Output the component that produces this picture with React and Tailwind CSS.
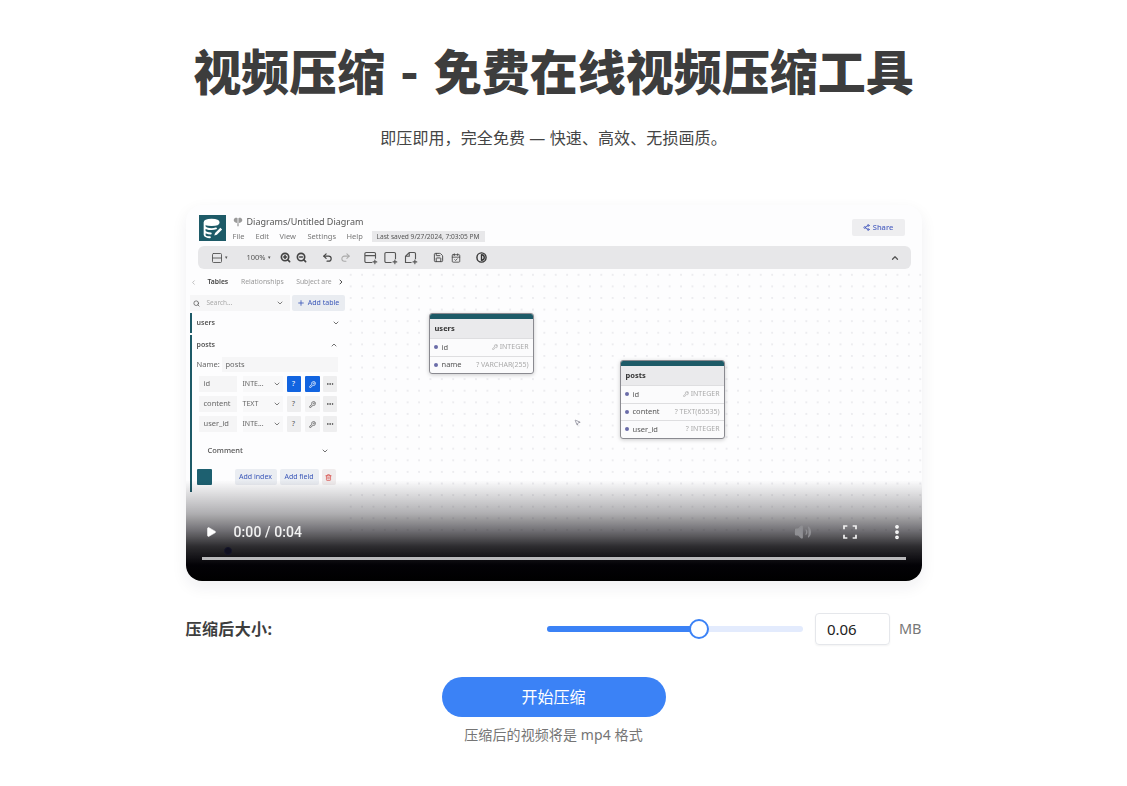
import React from "react";
import {
  Search, ChevronDown, ChevronUp, ChevronLeft, ChevronRight, Plus, KeyRound, MoreHorizontal, Trash2,
  Share2, ZoomIn, ZoomOut, Undo2, Redo2, Save, CalendarCheck, Contrast, Rows2, MousePointer2, Play, Volume2, EllipsisVertical,
} from "lucide-react";

function Logo() {
  return (
    <div className="w-[27px] h-[26px] bg-[#1d5a67] flex items-center justify-center shrink-0">
      <svg viewBox="0 0 24 24" className="w-[21px] h-[21px]" fill="none" stroke="#fff" strokeWidth="2.2" strokeLinecap="round">
        <ellipse cx="11" cy="5" rx="8" ry="3" fill="#fff" />
        <path d="M3 9.5c0 1.8 3.6 3.2 8 3.2 2 0 3.6-.3 5-.8M3 14.5c0 1.8 3.6 3.2 7 3.2M3 6v13c0 1.7 3 3 6 3" />
        <path d="M14 20l1-3 6-6 2 2-6 6z" fill="#fff" stroke="none" />
      </svg>
    </div>
  );
}

function TitleIcon() {
  return (
    <svg viewBox="0 0 24 24" className="w-[10px] h-[10px] mr-[4px]" fill="#9a9a9a">
      <path d="M11 3C8 1 3 2 2 6c-1 3 1 6 4 7l5 2zM13 3c3-2 8-1 9 3 1 3-1 6-4 7l-5 2z" />
      <path d="M10.5 15h3v7h-3z" />
    </svg>
  );
}

function AddShape({ kind }) {
  return (
    <svg viewBox="0 0 24 24" className="w-[15px] h-[15px]" fill="none" stroke="#555" strokeWidth="1.8" strokeLinecap="round">
      {kind === 0 && <path d="M14 20H5a2 2 0 0 1-2-2V6a2 2 0 0 1 2-2h13a2 2 0 0 1 2 2v7M3 9h17M19 16v6M16 19h6" />}
      {kind === 1 && <path d="M13 20H5a2 2 0 0 1-2-2V6a2 2 0 0 1 2-2h13a2 2 0 0 1 2 2v8M19 16v6M16 19h6" />}
      {kind === 2 && <path d="M13 20H4V10l6-6h8a2 2 0 0 1 2 2v8M4 10h6V4M19 16v6M16 19h6" />}
    </svg>
  );
}

function Toolbar() {
  const ic = "w-[11px] h-[11px] text-[#444]";
  return (
    <div className="mx-[12px] mt-[5px] h-[23px] w-[713px] bg-[#e7e7e9] rounded-[6px] flex items-center pl-[13px] pr-[11px] text-[#555]">
      <Rows2 className="w-[12px] h-[12px]" strokeWidth={1.8} />
      <span className="text-[5px] ml-[2px]">▾</span>
      <span className="text-[7.5px] ml-[19px]">100%</span>
      <span className="text-[5px] ml-[2px]">▾</span>
      <ZoomIn className={`${ic} ml-[9px]`} strokeWidth={3.6} />
      <ZoomOut className={`${ic} ml-[5px]`} strokeWidth={3.6} />
      <Undo2 className={`${ic} ml-[15px]`} strokeWidth={2.6} />
      <Redo2 className="w-[11px] h-[11px] text-[#aaa] ml-[7px]" strokeWidth={2.2} />
      <span className="ml-[12px] flex gap-[5px]">
        <AddShape kind={0} />
        <AddShape kind={1} />
        <AddShape kind={2} />
      </span>
      <Save className="w-[11px] h-[11px] ml-[15px] text-[#444]" strokeWidth={2} />
      <CalendarCheck className="w-[10px] h-[10px] ml-[7px] text-[#444]" strokeWidth={2} />
      <Contrast className="w-[11px] h-[11px] ml-[15px] text-[#333]" strokeWidth={3} />
      <ChevronUp className="w-[10px] h-[10px] ml-auto text-[#555]" strokeWidth={3} />
    </div>
  );
}

function Header() {
  return (
    <div className="flex pl-[13px] pr-[17px] pt-[10px] h-[36px] items-start">
      <Logo />
      <div className="ml-[7px] -mt-[1px]">
        <div className="flex items-center h-[14px] mt-[1px] text-[9px] text-[#555]">
          <TitleIcon />
          Diagrams/Untitled Diagram
        </div>
        <div className="flex items-center mt-[1px] h-[13px] text-[7.5px] text-[#777]">
          <span className="w-[23px]">File</span>
          <span className="w-[24px]">Edit</span>
          <span className="w-[28px]">View</span>
          <span className="w-[39px]">Settings</span>
          <span className="w-[25px]">Help</span>
          <span className="bg-[#e8e8ea] h-[11px] w-[113px] flex items-center justify-center text-[#555] text-[6.6px]">Last saved 9/27/2024, 7:03:05 PM</span>
        </div>
      </div>
      <div className="ml-auto mt-[4px] w-[53px] h-[17px] bg-[#eeeef0] rounded-[2px] flex items-center justify-center text-[#4a5fc0] text-[7.5px] font-medium">
        <Share2 className="w-[7px] h-[7px] mr-[3px]" strokeWidth={3} />
        Share
      </div>
    </div>
  );
}

const fields = [
  { name: "id", type: "INTE...", active: true },
  { name: "content", type: "TEXT", active: false },
  { name: "user_id", type: "INTE...", active: false },
];

function FieldRow({ f }) {
  return (
    <div className="flex items-center h-[16px] text-[7.5px] text-[#666]">
      <div className="w-[38px] h-[16px] bg-[#f5f5f6] flex items-center pl-[5px]">{f.name}</div>
      <div className="w-[40px] ml-[6px] h-[16px] bg-[#f8f8f9] flex items-center text-[7px] pr-[2px] justify-between">
        <span>{f.type}</span>
        <ChevronDown className="w-[8px] h-[8px]" strokeWidth={2.5} />
      </div>
      <div className={`ml-[4px] w-[14px] h-[16px] flex items-center justify-center rounded-[1px] ${f.active ? "bg-[#1264e0] text-white" : "bg-[#eeeeef] text-[#555]"}`}>?</div>
      <div className={`ml-[4px] w-[15px] h-[16px] flex items-center justify-center rounded-[1px] ${f.active ? "bg-[#1264e0] text-white" : "bg-[#f3f3f4] text-[#555]"}`}>
        <KeyRound className="w-[7px] h-[7px]" strokeWidth={2.5} />
      </div>
      <div className="ml-[3px] w-[14px] h-[16px] bg-[#eeeeef] flex items-center justify-center rounded-[1px] text-[#555]">
        <MoreHorizontal className="w-[8px] h-[8px]" strokeWidth={3} />
      </div>
    </div>
  );
}

function Sidebar() {
  return (
    <div className="w-[159px] pl-[4px] shrink-0 text-[#555]">
      <div className="flex items-center h-[26px] text-[6.8px] text-[#999] whitespace-nowrap">
        <ChevronLeft className="w-[7px] h-[7px] text-[#aaa]" strokeWidth={2.5} />
        <span className="ml-[11px] w-[34px] text-[#444] font-semibold">Tables</span>
        <span className="w-[56px]">Relationships</span>
        <span className="w-[41px]">Subject are</span>
        <ChevronRight className="w-[8px] h-[8px] text-[#444]" strokeWidth={3} />
      </div>
      <div className="flex items-center h-[16px]">
        <div className="w-[100px] h-[16px] bg-[#f6f6f7] flex items-center pl-[3px] pr-[6px] text-[6.5px] text-[#aaa]">
          <Search className="w-[7px] h-[7px] text-[#555] mr-[7px]" strokeWidth={2.5} />
          Search...
          <ChevronDown className="w-[8px] h-[8px] ml-auto text-[#666]" strokeWidth={2.5} />
        </div>
        <div className="ml-[2px] w-[53px] h-[16px] bg-[#e9ecf1] rounded-[2px] flex items-center justify-center text-[7px] text-[#3a57b8]">
          <Plus className="w-[8px] h-[8px] mr-[3px]" strokeWidth={2.5} />
          Add table
        </div>
      </div>
      <div className="mt-[2px] h-[20px] border-l-2 border-[#1d5a67] flex items-center pl-[5px] pr-[5px] text-[7px] font-semibold text-[#555]">
        users
        <ChevronDown className="w-[8px] h-[8px] ml-auto" strokeWidth={2.5} />
      </div>
      <div className="mt-[2px] h-[157px] border-l-2 border-[#1d5a67] pl-[5px] pr-[7px]">
        <div className="h-[20px] flex items-center text-[7px] font-semibold">
          posts
          <ChevronUp className="w-[8px] h-[8px] ml-auto" strokeWidth={2.5} />
        </div>
        <div className="mt-[2px] h-[15px] flex items-center text-[7.5px] text-[#666]">
          <span className="w-[25px]">Name:</span>
          <span className="flex-1 h-[15px] bg-[#f6f6f7] flex items-center pl-[4px]">posts</span>
        </div>
        <div className="mt-[4px] ml-[2px] flex flex-col gap-[4px]">
          {fields.map((f) => <FieldRow key={f.name} f={f} />)}
        </div>
        <div className="mt-[1px] h-[36px] flex items-center pl-[11px] pr-[9px] text-[7.5px] text-[#555] font-medium">
          Comment
          <ChevronDown className="w-[8px] h-[8px] ml-auto" strokeWidth={2.5} />
        </div>
        <div className="flex items-center h-[16px] text-[7px] text-[#3a57b8]">
          <div className="w-[15px] h-[16px] bg-[#1d6070] rounded-[1px]" />
          <div className="ml-[23px] w-[42px] h-[16px] bg-[#eaedf2] rounded-[2px] flex items-center justify-center">Add index</div>
          <div className="ml-[3px] w-[39px] h-[16px] bg-[#eaedf2] rounded-[2px] flex items-center justify-center">Add field</div>
          <div className="ml-[3px] w-[14px] h-[16px] bg-[#f0eced] rounded-[2px] flex items-center justify-center">
            <Trash2 className="w-[7px] h-[7px] text-[#d9534f]" strokeWidth={2.5} />
          </div>
        </div>
      </div>
    </div>
  );
}

function TableNode({ title, rows, className }) {
  return (
    <div className={`absolute w-[105px] bg-[#fbfbfc] rounded-[3px] border border-[#8a8a90] shadow-[0_1px_4px_rgba(0,0,0,0.2)] overflow-hidden ${className}`}>
      <div className="h-[5px] bg-[#1d5a67]" />
      <div className="h-[19px] bg-[#eaeaec] flex items-center pl-[5px] text-[7.5px] font-bold text-[#333]">{title}</div>
      {rows.map((r) => (
        <div key={r[0]} className="h-[17.5px] border-t border-[#dedee0] flex items-center pl-[4px] pr-[4px] text-[7.5px] text-[#555]">
          <span className="w-[4px] h-[4px] rounded-full bg-[#6a6ca8] mr-[4px]" />
          {r[0]}
          <span className="ml-auto text-[#aaa] text-[7px] flex items-center">
            {r[2] && <KeyRound className="w-[6px] h-[6px] mr-[2px]" strokeWidth={2.5} />}
            {r[1]}
          </span>
        </div>
      ))}
    </div>
  );
}

function Canvas() {
  return (
    <div className="relative flex-1 h-[270px] bg-[radial-gradient(#e3e3e7_0.6px,transparent_0.8px)] bg-[length:11.4px_11.6px]">
      <TableNode
        title="users"
        className="left-[84px] top-[44px]"
        rows={[["id", "INTEGER", true], ["name", "? VARCHAR(255)", false]]}
      />
      <TableNode
        title="posts"
        className="left-[275px] top-[91px]"
        rows={[["id", "INTEGER", true], ["content", "? TEXT(65535)", false], ["user_id", "? INTEGER", false]]}
      />
      <MousePointer2 className="absolute left-[229px] top-[150px] w-[7px] h-[7px] text-[#667]" strokeWidth={2} />
    </div>
  );
}

function Controls() {
  return (
    <div className="absolute left-0 right-0 bottom-0 h-[101px] bg-[linear-gradient(to_bottom,rgba(0,0,0,0)_0%,rgba(20,18,24,0.12)_12%,rgba(20,18,24,0.33)_33%,rgba(20,18,24,0.6)_50%,rgba(15,14,18,0.88)_66%,rgba(3,2,6,1)_84%,rgba(0,0,0,1)_100%)] flex flex-col justify-end">
      <div className="absolute left-[38px] top-[67px] w-[8px] h-[8px] rounded-full border border-[#15152a] bg-[#101020]" />
      <div className="flex items-center h-[24px] pl-[19px] pr-[16px] text-white">
        <Play className="w-[12px] h-[12px] fill-white" strokeWidth={1} />
        <span className="ml-[17px] text-[14px] font-medium tracking-[0.1px] font-['Roboto',sans-serif] text-[#f2f2f2]">0:00 / 0:04</span>
        <Volume2 className="ml-auto w-[18px] h-[18px] text-[#8f8f93] fill-[#8f8f93]" strokeWidth={1.6} />
        <svg viewBox="0 0 24 24" className="ml-[30px] w-[16px] h-[16px]" fill="none" stroke="#f0f0f0" strokeWidth="2.6">
          <path d="M3 8V3h5M16 3h5v5M21 16v5h-5M8 21H3v-5" />
        </svg>
        <EllipsisVertical className="ml-[30px] w-[18px] h-[18px]" strokeWidth={3} />
      </div>
      <div className="h-[3px] mx-[16px] mt-[13px] mb-[21px] bg-[#b9b9bb]" />
    </div>
  );
}

function VideoFrame() {
  return (
    <div className="relative w-[736px] h-[376px] rounded-[16px] overflow-hidden bg-[#fdfdfe] shadow-[0_6px_16px_rgba(30,30,60,0.07)]">
      <div className="blur-[0.4px] font-['Noto_Sans',sans-serif] h-full">
        <Header />
        <Toolbar />
        <div className="flex">
          <Sidebar />
          <Canvas />
        </div>
      </div>
      <Controls />
    </div>
  );
}

export default function App() {
  return (
    <div className="min-h-[786px] w-[1107px] bg-white flex flex-col items-center font-['Noto_Sans','Noto_Sans_CJK_SC',sans-serif] text-[#444] overflow-hidden">
      <h1 className="mt-[45px] text-[48px] leading-[48px] font-black [word-spacing:4px] text-[#3d3d3d] font-['Noto_Sans_CJK_SC',sans-serif]">视频压缩 - 免费在线视频压缩工具</h1>
      <p className="mt-[33px] text-[16px] leading-[24px] tracking-[0.1px] text-[#444]">即压即用，完全免费 — 快速、高效、无损画质。</p>
      <div className="mt-[55px]">
        <VideoFrame />
      </div>
      <div className="mt-[32px] w-[736px] h-[32px] flex items-center">
        <span className="font-bold text-[16px] tracking-[0.4px] text-[#3d3d3d]">压缩后大小:</span>
        <div className="ml-auto relative w-[256px] h-[6px] rounded-full bg-[#e3ebfd]">
          <div className="h-full w-[152px] rounded-full bg-[#3b82f6]" />
          <div className="absolute left-[142px] -top-[7px] w-[20px] h-[20px] rounded-full bg-white border-2 border-[#3b82f6]" />
        </div>
        <input
          readOnly
          value="0.06"
          className="ml-[12px] w-[75px] h-[32px] border border-[#e5e7eb] rounded-[4px] pl-[11px] text-[15px] text-[#222] outline-none shadow-[0_1px_2px_rgba(0,0,0,0.05)]"
        />
        <span className="ml-[9px] text-[14.5px] text-[#777]">MB</span>
      </div>
      <button className="mt-[32px] w-[224px] h-[40px] rounded-full bg-[#3b82f6] text-white text-[16px]">开始压缩</button>
      <p className="mt-[8px] text-[14px] leading-[20px] tracking-[0.1px] text-[#757575]">压缩后的视频将是 mp4 格式</p>
    </div>
  );
}
